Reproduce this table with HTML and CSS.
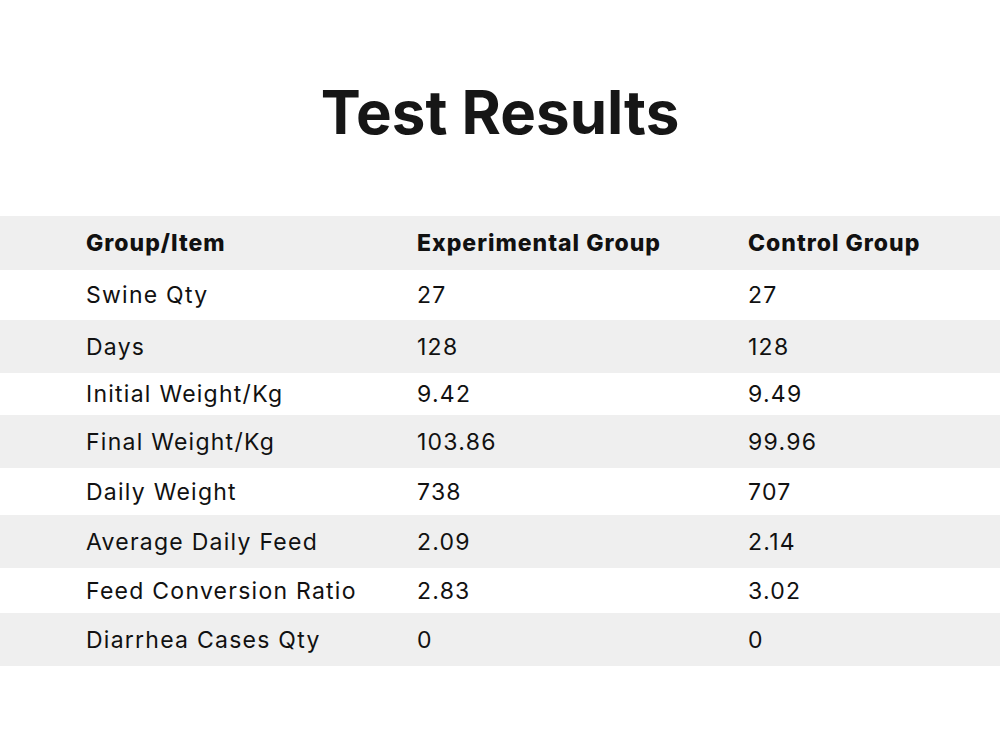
FILE: index.html
```html
<!DOCTYPE html>
<html>
<head>
<meta charset="utf-8">
<link rel="stylesheet" href="styles.css">
</head>
<body>
<main class="page">
  <h1 class="title">Test Results</h1>
  <div class="table">
    <div class="row head"><span>Group/Item</span><span>Experimental Group</span><span>Control Group</span></div>
    <div class="row r1"><span>Swine Qty</span><span>27</span><span>27</span></div>
    <div class="row alt"><span>Days</span><span>128</span><span>128</span></div>
    <div class="row r2"><span>Initial Weight/Kg</span><span>9.42</span><span>9.49</span></div>
    <div class="row alt"><span>Final Weight/Kg</span><span>103.86</span><span>99.96</span></div>
    <div class="row r3"><span>Daily Weight</span><span>738</span><span>707</span></div>
    <div class="row alt"><span>Average Daily Feed</span><span>2.09</span><span>2.14</span></div>
    <div class="row r4"><span>Feed Conversion Ratio</span><span>2.83</span><span>3.02</span></div>
    <div class="row alt"><span>Diarrhea Cases Qty</span><span>0</span><span>0</span></div>
  </div>
</main>
</body>
</html>
```
FILE: styles.css
```css
* { box-sizing: border-box; }
html, body { margin: 0; padding: 0; background: #ffffff; }
body { font-family: Inter, "Open Sans", sans-serif; color: #111111; }
.page { width: 1000px; height: 749px; padding-top: 76px; }
.title {
  margin: 0;
  height: 140px;
  text-align: center;
  font-size: 60px;
  font-weight: 700;
  line-height: 72px;
  color: #161616;
}
.table { display: flex; flex-direction: column; }
.row {
  display: grid;
  grid-template-columns: 331px 331px 1fr;
  padding-left: 86px;
  height: 46px;
  align-items: center;
  font-size: 23px;
  letter-spacing: 1.25px;
  font-weight: 400;
  white-space: nowrap;
}
.row.r1 { height: 50px; }
.row.r2 { height: 42px; }
.row.r3 { height: 47px; }
.row.r4 { height: 45px; }
.row.alt { background: #efefef; height: 53px; }
.row.head { background: #efefef; height: 54px; font-weight: 800; letter-spacing: 1px; }
```
